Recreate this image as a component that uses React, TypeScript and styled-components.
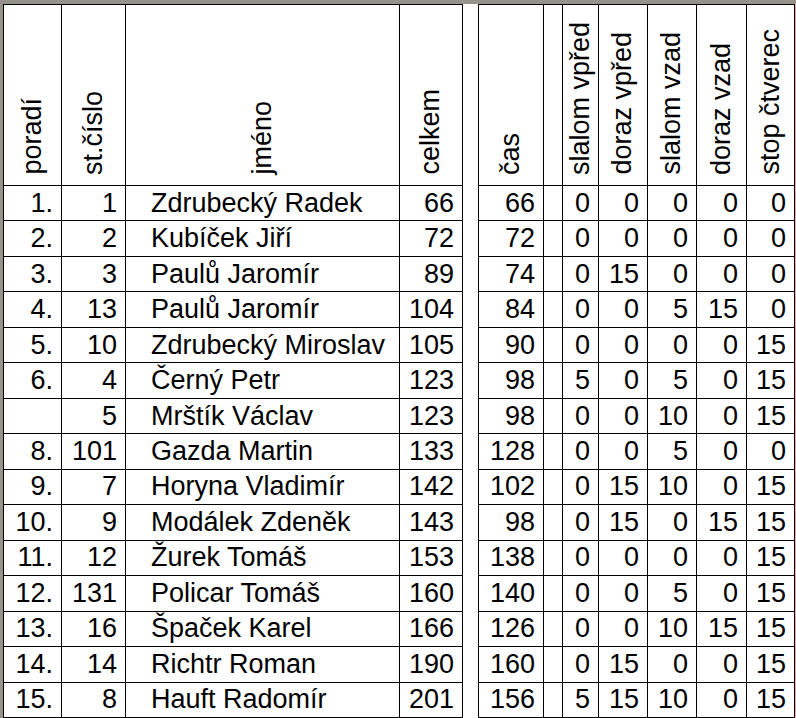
import React from 'react';
import styled, { createGlobalStyle } from 'styled-components';

const GlobalStyle = createGlobalStyle`
  html, body {
    margin: 0;
    padding: 0;
    background: #97928a;
  }
  #root {
    padding: 4px 0 0 3px;
  }
`;

const Sheet = styled.div`
  display: flex;
  width: 793px;
  background: #fff;
  font-family: "Liberation Sans", Arial, sans-serif;
  color: #000;
`;

const Block = styled.div<{ $cols: string }>`
  display: grid;
  grid-template-columns: ${p => p.$cols};
  grid-template-rows: 181px repeat(15, 1fr);
  height: 714px;
  box-sizing: border-box;
  border-left: 1px solid #000;
  border-top: 1px solid #000;

  & + & {
    margin-left: 15px;
  }
`;

// thin pinkish line at the right edge of the window
const EdgeLine = styled.div`
  width: 1px;
  height: 714px;
  background: #f2a6a6;
`;

const HeadCell = styled.div`
  box-sizing: border-box;
  border-right: 1px solid #000;
  border-bottom: 1px solid #000;
  display: flex;
  flex-direction: column;
  justify-content: flex-end;
  align-items: center;
  padding-bottom: 10px;
  overflow: hidden;
`;

const VText = styled.span`
  writing-mode: vertical-rl;
  transform: rotate(180deg);
  white-space: nowrap;
  font-size: 27px;
  line-height: 1.15;
`;

const Cell = styled.div<{ $left?: boolean }>`
  box-sizing: border-box;
  border-right: 1px solid #000;
  border-bottom: 1px solid #000;
  display: flex;
  align-items: center;
  justify-content: ${p => (p.$left ? 'flex-start' : 'flex-end')};
  padding: ${p => (p.$left ? '0 0 0 25px' : '0 8px 0 0')};
  font-size: 27px;
  line-height: 1;
  white-space: nowrap;
  overflow: hidden;
`;

type Row = {
  rank: string;
  no: string;
  name: string;
  total: string;
  time: string;
  pen: string[];
};

const rows: Row[] = [
  { rank: '1.', no: '1', name: 'Zdrubecký Radek', total: '66', time: '66', pen: ['0', '0', '0', '0', '0'] },
  { rank: '2.', no: '2', name: 'Kubíček Jiří', total: '72', time: '72', pen: ['0', '0', '0', '0', '0'] },
  { rank: '3.', no: '3', name: 'Paulů Jaromír', total: '89', time: '74', pen: ['0', '15', '0', '0', '0'] },
  { rank: '4.', no: '13', name: 'Paulů Jaromír', total: '104', time: '84', pen: ['0', '0', '5', '15', '0'] },
  { rank: '5.', no: '10', name: 'Zdrubecký Miroslav', total: '105', time: '90', pen: ['0', '0', '0', '0', '15'] },
  { rank: '6.', no: '4', name: 'Černý Petr', total: '123', time: '98', pen: ['5', '0', '5', '0', '15'] },
  { rank: '', no: '5', name: 'Mrštík Václav', total: '123', time: '98', pen: ['0', '0', '10', '0', '15'] },
  { rank: '8.', no: '101', name: 'Gazda Martin', total: '133', time: '128', pen: ['0', '0', '5', '0', '0'] },
  { rank: '9.', no: '7', name: 'Horyna Vladimír', total: '142', time: '102', pen: ['0', '15', '10', '0', '15'] },
  { rank: '10.', no: '9', name: 'Modálek Zdeněk', total: '143', time: '98', pen: ['0', '15', '0', '15', '15'] },
  { rank: '11.', no: '12', name: 'Žurek Tomáš', total: '153', time: '138', pen: ['0', '0', '0', '0', '15'] },
  { rank: '12.', no: '131', name: 'Policar Tomáš', total: '160', time: '140', pen: ['0', '0', '5', '0', '15'] },
  { rank: '13.', no: '16', name: 'Špaček Karel', total: '166', time: '126', pen: ['0', '0', '10', '15', '15'] },
  { rank: '14.', no: '14', name: 'Richtr Roman', total: '190', time: '160', pen: ['0', '15', '0', '0', '15'] },
  { rank: '15.', no: '8', name: 'Hauft Radomír', total: '201', time: '156', pen: ['5', '15', '10', '0', '15'] },
];

const leftHeads = ['poradí', 'st.číslo', 'jméno', 'celkem'];
const rightHeads = ['čas', '', 'slalom vpřed', 'doraz vpřed', 'slalom vzad', 'doraz vzad', 'stop čtverec'];

export default function App() {
  return (
    <>
      <GlobalStyle />
      <Sheet>
        <Block $cols="58px 64px 274px 63px">
          {leftHeads.map(h => (
            <HeadCell key={h}><VText>{h}</VText></HeadCell>
          ))}
          {rows.map((r, i) => (
            <React.Fragment key={i}>
              <Cell>{r.rank}</Cell>
              <Cell>{r.no}</Cell>
              <Cell $left>{r.name}</Cell>
              <Cell>{r.total}</Cell>
            </React.Fragment>
          ))}
        </Block>
        <Block $cols="65px 19px 36px 49px 49px 50px 48px">
          {rightHeads.map((h, i) => (
            <HeadCell key={i}>{h && <VText>{h}</VText>}</HeadCell>
          ))}
          {rows.map((r, i) => (
            <React.Fragment key={i}>
              <Cell>{r.time}</Cell>
              <Cell />
              {r.pen.map((p, j) => (
                <Cell key={j}>{p}</Cell>
              ))}
            </React.Fragment>
          ))}
        </Block>
        <EdgeLine />
      </Sheet>
    </>
  );
}
